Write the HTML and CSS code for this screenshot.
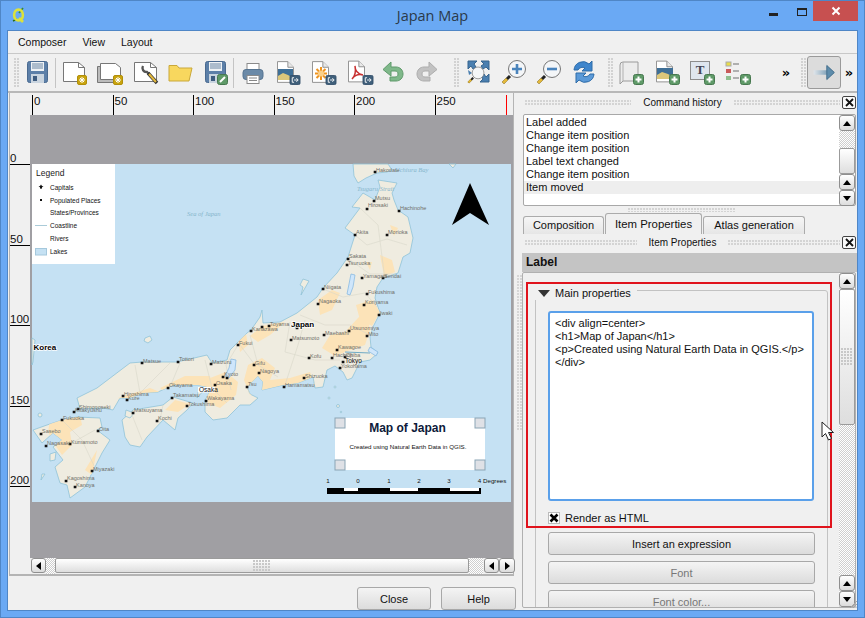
FILE: index.html
```html
<!DOCTYPE html>
<html lang="en">
<head>
<meta charset="utf-8">
<title>Japan Map</title>
<link rel="stylesheet" href="styles.css">
</head>
<body>
<svg class="defs" width="0" height="0" aria-hidden="true">
  <defs>
    <symbol id="b-plus" viewBox="0 0 11 11"><rect x=".5" y=".5" width="10" height="10" rx="2" fill="#5f9a68" stroke="#47784f"/><path d="M5.5 2.5v6M2.5 5.5h6" stroke="#fff" stroke-width="2"/></symbol>
    <symbol id="b-exp" viewBox="0 0 12 11"><rect x=".5" y=".5" width="11" height="10" rx="1.5" fill="#3f5f7a" stroke="#33506a"/><path d="M5 3H3v5h2M5 5.5h4M7.5 3.5l2 2-2 2" fill="none" stroke="#fff"/></symbol>
    <symbol id="b-star" viewBox="0 0 10 10"><rect x=".5" y=".5" width="9" height="9" rx="1.5" fill="#c9a40e" stroke="#b08e0a"/><path d="M5 2v6M2 5h6M3 3l4 4M7 3l-4 4" stroke="#fff"/></symbol>
    <symbol id="doc" viewBox="0 0 18 23"><path d="M.5.5h11l6 6v16H.5z" fill="#fff" stroke="#8c8c8c"/><path d="M11.5.5v6h6" fill="#e8e8e8" stroke="#8c8c8c"/></symbol>
    <symbol id="floppy" viewBox="0 0 21 22"><rect x=".5" y=".5" width="20" height="21" rx="2" fill="#5c7fa8" stroke="#4a6a90"/><rect x="4" y="1" width="13" height="9" fill="#eef2f5"/><path d="M5 3h11M5 5h11M5 7h11" stroke="#6b86a4"/><rect x="4" y="13" width="13" height="9" fill="#c9d4df"/><rect x="6" y="15" width="4" height="5" fill="#3e5c80"/></symbol>
    <symbol id="lens" viewBox="0 0 26 26"><path d="M9 17L2 24" stroke="#222" stroke-width="3"/><path d="M6 20l-4 4" stroke="#e4b93a" stroke-width="3"/><circle cx="16" cy="10" r="8.5" fill="#f4f6f8" stroke="#777"/></symbol>
  </defs>
</svg>

<div class="window">
  <header class="titlebar">
    <div class="title-left">
      <svg class="qgis" viewBox="0 0 14 16" width="14" height="16"><path d="M11 1L7 6" stroke="#3a8a2a" stroke-width="1.6"/><path d="M1 14l4-2" stroke="#2a6a20" stroke-width="1.4"/><ellipse cx="6.5" cy="8" rx="4.4" ry="5.4" fill="none" stroke="#dce23c" stroke-width="2.6"/><path d="M7 11l4 4" stroke="#dce23c" stroke-width="2.6"/></svg>
    </div>
    <h1 class="title-text">Japan Map</h1>
    <div class="win-controls">
      <span class="win-min"></span>
      <span class="win-max"></span>
      <span class="win-close"><svg viewBox="0 0 10 10" width="10" height="10"><path d="M1.5 1.5l7 7M8.5 1.5l-7 7" stroke="#fff" stroke-width="2"/></svg></span>
    </div>
  </header>

  <div class="client">
    <nav class="menubar"><span>Composer</span><span>View</span><span>Layout</span></nav>

    <div class="toolbar">
      <span class="tb-grip g-first"></span>
      <div class="tb-group g-a">
        <svg class="ic" viewBox="0 0 36 36"><use href="#floppy" x="8" y="6" width="21" height="22"/></svg>
        <span class="tb-sep"></span>
        <svg class="ic" viewBox="0 0 36 36"><path d="M8.5 7.5h15l6 5v14h-21z" fill="#fff" stroke="#777"/><path d="M23.5 7.5v5h6" fill="none" stroke="#777"/><use href="#b-star" x="22" y="20" width="10" height="10"/></svg>
        <svg class="ic" viewBox="0 0 36 36"><path d="M7.5 11.5h20v16h-20z" fill="#bbb" stroke="#777"/><path d="M10.5 8.5h15l5 4v12h-20z" fill="#fff" stroke="#777"/><use href="#b-star" x="23" y="20" width="10" height="10"/></svg>
        <svg class="ic" viewBox="0 0 36 36"><path d="M8.5 7.5h16l6 5v14h-22z" fill="#fff" stroke="#777"/><path d="M24.5 7.5v5h6" fill="none" stroke="#777"/><path d="M17 11a4 4 0 0 0 4 6l2 2" fill="none" stroke="#555" stroke-width="2.4"/><path d="M22 18l9 10" stroke="#333" stroke-width="3.4"/><path d="M23 19l7 8" stroke="#e2b83c" stroke-width="2"/></svg>
        <svg class="ic" viewBox="0 0 36 36"><path d="M8 10.500h8l2 2.500h13l-3 13H8z" fill="#f8d75e" stroke="#c9a83a"/></svg>
        <svg class="ic" viewBox="0 0 36 36"><use href="#floppy" x="8" y="6" width="21" height="22"/><rect x="20.500" y="19.500" width="10" height="10" rx="2" fill="#5f9a68" stroke="#47784f"/><path d="M23 27l5-5" stroke="#fff" stroke-width="2"/></svg>
      </div>
      <span class="tb-sep s2"></span>
      <div class="tb-group g-b">
        <svg class="ic" viewBox="0 0 36 36"><rect x="12" y="8.500" width="12" height="8" fill="#fff" stroke="#8a8a8a"/><rect x="8" y="14.500" width="20" height="10" rx="3" fill="#6b8aa8" stroke="#557390"/><rect x="12" y="20.500" width="12" height="8" fill="#fff" stroke="#8a8a8a"/><path d="M14 23h8M14 25.500h8" stroke="#888"/></svg>
        <svg class="ic" viewBox="0 0 36 36"><use href="#doc" x="6" y="6" width="17" height="22"/><rect x="7" y="14" width="15" height="11" fill="#3f6f96"/><path d="M7 25v-4l5-3 5 2 5 3v2z" fill="#dcc77a"/><use href="#b-exp" x="18" y="20" width="12" height="10"/></svg>
        <svg class="ic" viewBox="0 0 36 36"><use href="#doc" x="6" y="6" width="17" height="22"/><path d="M15 12v13M9 18.500h12M10.500 14l9 9M19.500 14l-9 9" stroke="#ee9420" stroke-width="2"/><circle cx="15" cy="18.500" r="3" fill="#fbd089"/><use href="#b-exp" x="19" y="20" width="12" height="10"/></svg>
        <svg class="ic" viewBox="0 0 36 36"><use href="#doc" x="6" y="5" width="17" height="23"/><path d="M10 24c3-3 4-8 3-13 0 5 3 8 8 9-4-1-8 0-11 4z" fill="none" stroke="#c83232" stroke-width="1.500"/><use href="#b-exp" x="20" y="20" width="12" height="10"/></svg>
        <svg class="ic" viewBox="0 0 36 36"><path d="M6 14.500l8-7.500v5h5c4 0 7 3 7 7s-3 7-7 7h-6v-4h5c2 0 3-1 3-3s-1-3-3-3h-4v5z" fill="#7fb88a" stroke="#5f9a6a"/></svg>
        <svg class="ic" viewBox="0 0 36 36"><path d="M24 14.500l-8-7.500v5h-5c-4 0-7 3-7 7s3 7 7 7h6v-4h-5c-2 0-3-1-3-3s1-3 3-3h4v5z" fill="#c2c2c2" stroke="#adadad"/></svg>
      </div>
      <span class="tb-grip g-c"></span>
      <div class="tb-group">
        <svg class="ic" viewBox="0 0 36 36"><path d="M8 6h9l-3 3 2 3-3 2-2-3-3 3zM29 6v9l-3-3-3 2-2-3 3-2-3-3zM29 27h-9l3-3-2-3 3-2 2 3 3-3z" fill="#4a7fb0" stroke="#37648e"/><path d="M8 15l4 3-3 2z" fill="#4a7fb0"/><use href="#lens" x="7" y="11" width="18" height="18"/></svg>
        <svg class="ic" viewBox="0 0 36 36"><use href="#lens" x="5" y="4" width="26" height="26"/><path d="M21 9v10M16 14h10" stroke="#4a84bc" stroke-width="2.600"/></svg>
        <svg class="ic" viewBox="0 0 36 36"><use href="#lens" x="5" y="4" width="26" height="26"/><path d="M16 14h10" stroke="#4a84bc" stroke-width="2.600"/></svg>
        <svg class="ic" viewBox="0 0 36 36"><path d="M7 15a9 9 0 0 1 15-6l3-3v10h-10l3-3a5 5 0 0 0-7 2z" fill="#3e85cc" stroke="#2f6ca8"/><path d="M27 19a9 9 0 0 1-15 6l-3 3V18h10l-3 3a5 5 0 0 0 7-2z" fill="#5b9ad8" stroke="#2f6ca8"/></svg>
      </div>
      <span class="tb-grip g-d"></span>
      <div class="tb-group">
        <svg class="ic" viewBox="0 0 36 36"><path d="M6 10a3 3 0 0 1 3-3h15v19H9l-3 3z" fill="#ececec" stroke="#9a9a9a"/><path d="M9 7v19" stroke="#b0b0b0"/><use href="#b-plus" x="19" y="19" width="11" height="11"/></svg>
        <svg class="ic" viewBox="0 0 36 36"><use href="#doc" x="6" y="5" width="17" height="23"/><rect x="7" y="13" width="16" height="11" fill="#3f6f96"/><path d="M7 24v-4l5-3 6 2 5 3v2z" fill="#dcc77a"/><use href="#b-plus" x="19" y="19" width="11" height="11"/></svg>
        <svg class="ic" viewBox="0 0 36 36"><rect x="5.500" y="6.500" width="19" height="18" fill="#dfe6ee" stroke="#8d8d8d"/><text class="ic-t" x="15" y="19">T</text><use href="#b-plus" x="19" y="19" width="11" height="11"/></svg>
        <svg class="ic" viewBox="0 0 36 36"><rect x="5" y="7" width="5" height="4" fill="#e7dc4a" stroke="#aaa"/><rect x="5" y="14" width="5" height="4" fill="#c95a5a"/><rect x="5" y="21" width="5" height="4" fill="#8fbf8f"/><path d="M12 9h6M12 16h6M12 23h6" stroke="#999" stroke-width="1.500"/><use href="#b-plus" x="19" y="19" width="11" height="11"/></svg>
      </div>
      <div class="tb-end">
        <span class="more">»</span>
        <span class="tb-grip g-e"></span>
        <span class="tb-active"><svg viewBox="0 0 34 33" width="32" height="31"><defs><linearGradient id="shaft"><stop offset="0" stop-color="#dfe5ea"/><stop offset="1" stop-color="#4f7fa0"/></linearGradient></defs><path d="M6 14h14v-5l8 7.500-8 7.500v-5H6z" fill="url(#shaft)"/><path d="M20 9l8 7.500-8 7.500z" fill="#5e8cab" stroke="#456f8c"/></svg></span>
        <span class="more m2">»</span>
      </div>
    </div>

    <div class="workspace">
      <section class="composer">
        <div class="view">
          <div class="corner"></div>
          <div class="ruler-top">
            <span class="rt">0</span><span class="rt">50</span><span class="rt">100</span><span class="rt">150</span><span class="rt">200</span><span class="rt rt-last">250</span>
          </div>
          <div class="ruler-left">
            <span class="rl rl-first">0</span><span class="rl">50</span><span class="rl">100</span><span class="rl">150</span><span class="rl">200</span>
          </div>
          <div class="canvas">
            <svg class="map" viewBox="30 115 483 443" width="483" height="443">
              <defs>
                <path id="honshu" d="M378 180L397 183 392 193 394 200 398 210 408 217 413 238 410 253 403 257 398 273 383 278 377 287 375 298 380 313 373 327 370 337 371 347 378 353 370 360 360 362 352 378 347 380 343 372 335 366 327 370 323 387 315 388 313 377 298 383 283 385 262 390 263 382 258 376 247 387 250 394 258 398 250 405 240 405 227 418 213 420 205 412 205 400 212 388 198 385 173 385 158 392 143 393 130 398 120 398 113 410 103 408 80 409 77 398 97 388 130 363 142 362 150 362 177 362 207 355 212 363 227 360 230 350 247 333 251 330 260 317 262 310 263 323 280 322 297 313 317 297 323 288 337 273 348 257 355 235 345 228 360 208 352 207 363 193 375 200 380 187Z"/>
                <path id="shikoku" d="M122 420L133 410 163 405 173 397 193 403 187 410 178 418 175 430 163 420 147 437 140 447 130 445 125 437Z"/>
                <path id="kyushu" d="M47 425L62 420 77 417 100 418 102 427 97 430 110 440 102 453 92 473 85 487 70 498 67 485 60 483 55 467 63 460 53 447 62 440 53 433 42 443 33 430Z"/>
                <path id="hokkaido" d="M353 164L354 176 358 183 366 178 377 173 387 172 392 170 388 164Z"/>
                <clipPath id="land">
                  <use href="#honshu"/><use href="#shikoku"/><use href="#kyushu"/><use href="#hokkaido"/>
                </clipPath>
              </defs>
              <rect x="32" y="164" width="479" height="338" class="sea"/>
              <g class="land">
                <use href="#honshu"/><use href="#shikoku"/><use href="#kyushu"/><use href="#hokkaido"/>
                <path d="M303 279L309 281 305 288 301 295 303 287 300 285Z"/>
                <path d="M32 338L35 340 33 362 32 365Z"/>
                <path d="M145 338L150 336 152 340 148 343 144 341Z"/>
                <path d="M449 164L456 164 453 168Z"/>
                <path d="M198 392L203 387 204 390 197 398Z"/>
                <path d="M126 410L134 413 130 418 125 416Z"/>
                <path d="M50 454L56 452 55 460 50 461Z"/>
                <path d="M42 474L45 474 41 480Z"/>
                <circle cx="40" cy="415" r="2"/><circle cx="335" cy="387" r="1"/><circle cx="329" cy="398" r="1"/><circle cx="338" cy="406" r="1.500"/><circle cx="341" cy="412" r=".8"/>
              </g>
              <g clip-path="url(#land)">
                <path class="urban" d="M330 335L345 332 358 318 366 310 370 330 365 345 350 350 335 356 322 348ZM356 305L372 300 380 312 372 326 360 320ZM318 300L332 290 340 293 332 310 320 315ZM248 365L262 358 275 368 270 380 290 378 300 375 310 372 315 385 285 386 262 392 250 395 244 380ZM210 378L226 372 238 382 236 395 220 408 208 403 205 390ZM160 388L185 376 210 376 212 386 190 388 165 392ZM118 398L150 388 160 392 130 402ZM50 420L80 415 82 425 70 432 72 445 62 455 55 445 48 432ZM85 470L97 450 92 475ZM250 336L262 326 285 322 270 335 258 342ZM380 255L392 260 395 272 384 276ZM238 340L246 334 248 345 240 352ZM165 410L175 400 190 404 178 412ZM390 225L398 228 394 236ZM366 262L372 262 370 270Z"/>
                <path class="border" d="M355 235L367 245 387 239 407 245M350 260L370 274 395 274M323 289L343 297 365 293 377 307M300 315L325 325 350 325 370 335M290 322L285 352 315 360 340 360M250 335L258 365 278 377M238 345L226 365 231 390M212 388L227 403M140 393L135 365M170 387L180 363M130 410L142 440M163 405L158 430M62 420L82 440 96 470M70 444L95 430M140 393L170 363M360 208L378 225 385 280M305 320L298 345 285 385M255 365L240 345M205 360L212 388"/>
                <path class="coast" d="M345 352L370 353"/>
              </g>
              <path class="lake" d="M351 274L355 275 353 287 350 295 347 294 349 284Z"/>
              <path class="lake" d="M231 359L236 360 235 370 229 378 225 376 229 368Z"/>
              <path class="lake" d="M370 347L378 352 376 356 368 351Z"/>
              <text class="seatext" x="187" y="216">Sea of Japan</text>
              <text class="seatext" x="395" y="172">Uchiura Bay</text>
              <text class="seatext" x="357" y="191">Tsugaru Strait</text>
              <path class="dots" d="M375 172h.1M374 201h.1M367 209h.1M399 211h.1M355 235h.1M387 235h.1M348 259h.1M347 265h.1M362 278h.1M383 278h.1M323 289h.1M318 304h.1M367 294h.1M364 305h.1M379 315h.1M349 331h.1M367 336h.1M324 335h.1M291 340h.1M269 326h.1M262 327h.1M251 331h.1M238 345h.1M254 365h.1M259 373h.1M247 387h.1M284 387h.1M304 378h.1M309 358h.1M332 358h.1M337 350h.1M345 357h.1M343 362h.1M340 368h.1M297 328h.1M211 364h.1M223 377h.1M227 378h.1M215 385h.1M206 401h.1M187 406h.1M168 388h.1M172 398h.1M142 363h.1M178 362h.1M123 396h.1M127 400h.1M133 413h.1M157 421h.1M78 409h.1M74 412h.1M62 420h.1M98 431h.1M41 434h.1M46 446h.1M70 444h.1M92 471h.1M66 481h.1M75 487h.1M238 345h.1"/>
              <g class="city">
                <text x="376" y="172">Hakodate</text><text x="375" y="200">Mutsu</text><text x="368" y="207">Hirosaki</text><text x="400" y="210">Hachinohe</text><text x="356" y="234">Akita</text><text x="388" y="234">Morioka</text><text x="349" y="258">Sakata</text><text x="348" y="265">Tsuruoka</text><text x="363" y="278">Yamagata</text><text x="384" y="278">Sendai</text><text x="324" y="289">Niigata</text><text x="319" y="303">Nagaoka</text><text x="368" y="294">Fukushima</text><text x="365" y="304">Koriyama</text><text x="380" y="315">Iwaki</text><text x="350" y="330">Utsunomiya</text><text x="368" y="336">Mito</text><text x="325" y="335">Maebashi</text><text x="292" y="340">Matsumoto</text><text x="270" y="326">Toyama</text><text x="252" y="331">Kanazawa</text><text x="239" y="345">Fukui</text><text x="255" y="365">Gifu</text><text x="260" y="373">Nagoya</text><text x="248" y="386">Tsu</text><text x="285" y="387">Hamamatsu</text><text x="305" y="378">Shizuoka</text><text x="310" y="358">Kofu</text><text x="333" y="357">Hachioji</text><text x="338" y="349">Kawagoe</text><text x="346" y="357">Chiba</text><text x="341" y="368">Yokohama</text><text x="212" y="364">Maizuru</text><text x="224" y="376">Kyoto</text><text x="216" y="385">Osaka</text><text x="207" y="400">Wakayama</text><text x="188" y="406">Tokushima</text><text x="169" y="387">Okayama</text><text x="173" y="397">Takamatsu</text><text x="143" y="363">Matsue</text><text x="179" y="361">Tottori</text><text x="124" y="396">Hiroshima</text><text x="128" y="400">Kure</text><text x="134" y="412">Matsuyama</text><text x="158" y="420">Kochi</text><text x="79" y="409">Shimonoseki</text><text x="75" y="412">Kitakyushu</text><text x="63" y="420">Fukuoka</text><text x="99" y="431">Oita</text><text x="42" y="433">Sasebo</text><text x="47" y="445">Nagasaki</text><text x="71" y="444">Kumamoto</text><text x="93" y="471">Miyazaki</text><text x="67" y="480">Kagoshima</text><text x="76" y="487">Kanoya</text>
              </g>
              <rect class="halo" x="198" y="387" width="17" height="5.500"/>
              <text class="city-main" x="199" y="391.500">Osaka</text>
              <text class="city-main" x="345" y="363">Tokyo</text>
              <text class="country" x="291" y="326.500">Japan</text>
              <text class="country" x="33.500" y="350">Korea</text>

              <rect class="white" x="32" y="164" width="83" height="100"/>
              <text class="lg-title" x="36" y="176">Legend</text>
              <g class="lg">
                <text x="50" y="190">Capitals</text><text x="50" y="203">Populated Places</text><text x="50" y="215">States/Provinces</text><text x="50" y="228">Coastline</text><text x="50" y="241">Rivers</text><text x="50" y="254">Lakes</text>
              </g>
              <path d="M41 184.500l1 1.500 1.500.5-1.500.8v1.700l-1-.8-1 .8v-1.700l-1.500-.8 1.500-.5z" fill="#111"/>
              <rect x="40" y="199" width="2" height="2" fill="#111"/>
              <path d="M35 225.500h12" stroke="#aacbd8"/>
              <rect x="35.500" y="248.500" width="11" height="6.500" fill="#c5e1f3" stroke="#a5c8dc"/>

              <path class="north" d="M470 183l19 42-19-12-18 12z"/>

              <rect class="white" x="335" y="418" width="150" height="52"/>
              <text class="map-title" x="407.500" y="432">Map of Japan</text>
              <text class="map-sub" x="408" y="449">Created using Natural Earth Data in QGIS.</text>
              <g class="handle">
                <rect x="335" y="418" width="10" height="10"/><rect x="475" y="418" width="10" height="10"/><rect x="335" y="460" width="10" height="10"/><rect x="475" y="460" width="10" height="10"/>
              </g>
              <g class="scale-txt">
                <text x="328" y="483">1</text><text x="358" y="483">0</text><text x="389" y="483">1</text><text x="419" y="483">2</text><text x="449" y="483">3</text><text x="479.500" y="483">4</text><text x="483" y="483" class="start">Degrees</text>
              </g>
              <rect x="327" y="488" width="154" height="6" fill="#000"/>
              <path d="M344 489.500h14M390 489.500h28M450 489.500h29" stroke="#fff" stroke-width="3"/>
            </svg>
          </div>
          <div class="hscroll">
            <span class="sb-btn"><i class="tri tri-l"></i></span>
            <span class="sb-track sb-s"></span>
            <span class="sb-thumb"><i class="thumb-grip"></i></span>
            <span class="sb-track sb-e"></span>
            <span class="sb-btn"><i class="tri tri-l"></i></span>
            <span class="sb-btn"><i class="tri tri-r"></i></span>
          </div>
        </div>
        <footer class="actions">
          <button class="btn btn-close" type="button">Close</button>
          <button class="btn btn-help" type="button">Help</button>
        </footer>
      </section>

      <aside class="docks">
        <div class="dock-title dt1"><i class="dgrip"></i><span>Command history</span><i class="dgrip"></i><b class="xbtn"><svg viewBox="0 0 9 9" width="9" height="9"><path d="M1 1l7 7M8 1l-7 7" stroke="#111" stroke-width="1.800"/></svg></b></div>
        <div class="history">
          <ul class="hist-list">
            <li>Label added</li><li>Change item position</li><li>Change item position</li><li>Label text changed</li><li>Change item position</li><li class="sel">Item moved</li>
          </ul>
          <div class="vscroll">
            <span class="sb-btn v"><i class="tri tri-u"></i></span>
            <span class="sb-track hist-track"></span>
            <span class="sb-thumb hist-thumb"></span>
            <span class="sb-btn v"><i class="tri tri-u"></i></span>
            <span class="sb-btn v"><i class="tri tri-d"></i></span>
          </div>
        </div>
        <div class="splitter"><i></i></div>
        <div class="tabs">
          <span class="tab t1">Composition</span>
          <span class="tab t2 on">Item Properties</span>
          <span class="tab t3">Atlas generation</span>
        </div>
        <div class="dock-title dt2"><i class="dgrip"></i><span>Item Properties</span><i class="dgrip"></i><b class="xbtn"><svg viewBox="0 0 9 9" width="9" height="9"><path d="M1 1l7 7M8 1l-7 7" stroke="#111" stroke-width="1.800"/></svg></b></div>
        <div class="label-head">Label</div>
        <div class="prop-row">
          <i class="side-grip"></i>
          <div class="prop-frame">
            <div class="prop-content">
              <div class="group">
                <div class="group-title"><i class="tri-down"></i><span>Main properties</span></div>
                <div class="editor">&lt;div align=center&gt;<br>&lt;h1&gt;Map of Japan&lt;/h1&gt;<br>&lt;p&gt;Created using Natural Earth Data in QGIS.&lt;/p&gt;<br>&lt;/div&gt;</div>
                <div class="check-row">
                  <span class="check"><svg viewBox="0 0 10 10" width="10" height="10"><path d="M1.500 1.500l7 7M8.500 1.500l-7 7" stroke="#000" stroke-width="2.600"/></svg></span>
                  <span>Render as HTML</span>
                </div>
                <button class="btn wide" type="button">Insert an expression</button>
                <button class="btn wide dis" type="button">Font</button>
                <button class="btn wide dis" type="button">Font color...</button>
              </div>
            </div>
            <div class="vscroll prop-sb">
              <span class="sb-btn v"><i class="tri tri-u"></i></span>
              <span class="sb-thumb prop-thumb"><i class="thumb-grip"></i></span>
              <span class="sb-track prop-track"></span>
              <span class="sb-btn v"><i class="tri tri-u"></i></span>
              <span class="sb-btn v"><i class="tri tri-d"></i></span>
            </div>
          </div>
        </div>
        <div class="annotation"></div>
        <svg class="cursor" viewBox="0 0 13 20" width="13" height="20"><path d="M1 1v15l3.500-3.500 3 6.500 3-1.500-3-6h5z" fill="#fff" stroke="#222"/></svg>
        <svg class="resize" viewBox="0 0 7 7" width="7" height="7"><path d="M7 0L0 7M7 3L3 7M7 5.500L5.500 7" stroke="#a5a5a5"/></svg>
      </aside>
    </div>
  </div>
</div>
</body>
</html>
```

FILE: styles.css
```css
* { box-sizing: border-box; }
html, body { margin: 0; padding: 0; }
body {
  width: 865px;
  height: 618px;
  overflow: hidden;
  font-family: "Liberation Sans", sans-serif;
  font-size: 11px;
  color: #111;
  background: #6aa9f4;
}
.defs { position: absolute; }
i, b { display: block; font-style: normal; }

.window {
  width: 865px;
  height: 618px;
  display: flex;
  flex-direction: column;
  border: 1px solid #4f86c6;
}
.titlebar {
  height: 30px;
  flex: none;
  display: grid;
  grid-template-columns: 1fr auto 1fr;
}
.title-left { padding: 6px 0 0 11px; }
.qgis { display: block; }
.title-text {
  margin: 0;
  font-weight: 400;
  font-size: 14.5px;
  line-height: 30px;
  color: #2b3a4a;
  font-family: "Open Sans", "Liberation Sans", sans-serif;
}
.win-controls {
  display: flex;
  justify-content: flex-end;
  align-items: flex-start;
  padding-right: 6px;
}
.win-min { width: 9px; height: 3px; margin: 12px 19px 0 0; background: #222; }
.win-max { width: 10px; height: 8px; margin: 7px 6px 0 0; border: 1px solid #222; border-top-width: 2px; }
.win-close {
  width: 45px;
  height: 20px;
  background: #c75050;
  display: flex;
  align-items: center;
  justify-content: center;
}

.client {
  width: 849px;
  height: 579px;
  margin-left: 7px;
  background: #f0f0f0;
  box-shadow: 0 0 0 1px #4f86c6;
  display: flex;
  flex-direction: column;
}
.menubar {
  height: 22px;
  flex: none;
  display: flex;
  align-items: center;
  gap: 16px;
  padding-left: 10px;
  font-size: 10.500px;
}
.toolbar {
  height: 40px;
  flex: none;
  display: flex;
  align-items: center;
  border-top: 1px solid #c8c8c8;
  border-bottom: 2px solid #b8b8b8;
}
.tb-grip {
  display: block;
  flex: none;
  width: 6px;
  height: 30px;
  background-image: radial-gradient(circle at 1px 1px, #d2d2d2 1px, transparent 1.2px);
  background-size: 3px 3px;
}
.g-first { margin-left: 6px; margin-right: -1px; }
.g-c { margin-left: 6px; }
.g-d { margin-left: 6px; }
.g-e { margin-left: 9px; }
.tb-group { display: flex; align-items: center; }
.ic { display: block; flex: none; width: 36px; height: 36px; margin-right: -.5px; }
.tb-sep { display: block; flex: none; width: 1px; height: 30px; margin-right: -1px; background: #c4c4c4; }
.s2 { margin: 0 1px; }
.ic-t { font-family: "Liberation Serif", serif; font-size: 13px; font-weight: 700; text-anchor: middle; fill: #445; }
.tb-end { margin-left: auto; display: flex; align-items: center; padding-right: 2px; }
.more { width: 12px; text-align: center; font-size: 13px; font-weight: 700; line-height: 14px; font-family: "DejaVu Sans", sans-serif; color: #000; }
.tb-active {
  display: block;
  width: 34px;
  height: 33px;
  border: 1px solid #9a9a9a;
  border-radius: 3px;
  background: #dcdcdc;
}
.tb-active svg { display: block; }
.m2 { margin-left: 2px; }

.workspace { flex: 1; min-height: 0; display: flex; }
.composer { width: 508px; flex: none; display: flex; flex-direction: column; }
.view {
  width: 505px;
  height: 483px;
  flex: none;
  margin-left: 1px;
  border-left: 1px solid #b4b4b4;
  border-right: 1px solid #b4b4b4;
  border-bottom: 2px solid #b4b4b4;
  display: grid;
  grid-template-columns: 20px 483px;
  grid-template-rows: 22px 443px 16px;
}
.corner { background: #f0f0f0; }
.ruler-top { display: flex; overflow: hidden; padding-left: 2px; font-size: 11.5px; }
.rt {
  flex: none;
  width: 80.500px;
  height: 20px;
  margin-top: 2px;
  border-left: 1px solid #000;
  padding-left: 1px;
  line-height: 12px;
}
.rt-last { width: 72px; border-right: 1px solid #f00; }
.ruler-left { grid-row: 2 / 4; display: flex; flex-direction: column; font-size: 11.500px; }
.rl {
  flex: none;
  height: 80.500px;
  border-bottom: 1px solid #000;
  display: flex;
  align-items: flex-end;
  line-height: 12px;
  padding-left: 0;
}
.rl-first { height: 50px; }
.canvas { background: #a09fa3; overflow: hidden; }
.map { display: block; }
.sea { fill: #c5e1f3; }
.land use, .land path, .land circle { fill: #efece0; stroke: #8fc3d8; stroke-width: .8; }
.urban { fill: #fce3b8; }
.border { fill: none; stroke: #d9d6c9; stroke-width: .6; }
.coast { fill: none; stroke: #6fa9c4; stroke-width: 1; }
.lake { fill: #cfe6fb; stroke: #7fb4e0; stroke-width: .7; }
.seatext { font-family: "Liberation Serif", serif; font-style: italic; font-size: 6.500px; fill: #86b6cc; }
.dots { fill: none; stroke: #111; stroke-width: 2.600; stroke-linecap: square; }
.city text { font-family: "Liberation Sans", sans-serif; font-size: 5.500px; fill: #6f6f68; }
.halo { fill: #fff; }
.city-main { font-family: "Liberation Sans", sans-serif; font-size: 6.500px; fill: #111; }
.country { font-family: "Liberation Sans", sans-serif; font-size: 8px; font-weight: 700; fill: #000; paint-order: stroke; stroke: #fff; stroke-width: 1.500px; }
.white { fill: #fff; }
.lg-title { font-family: "Liberation Sans", sans-serif; font-size: 8.500px; fill: #222; }
.lg text { font-family: "Liberation Sans", sans-serif; font-size: 6.500px; fill: #111; }
.north { fill: #000; }
.map-title { font-family: "Liberation Sans", sans-serif; font-size: 12px; font-weight: 700; text-anchor: middle; fill: #0d1a3a; }
.map-sub { font-family: "Liberation Sans", sans-serif; font-size: 6.200px; text-anchor: middle; fill: #111; }
.handle rect { fill: #dfe1e6; stroke: #8ba5b5; stroke-width: 1; }
.scale-txt text { font-family: "Liberation Sans", sans-serif; font-size: 6.200px; text-anchor: middle; fill: #111; }
.scale-txt .start { text-anchor: start; }

.hscroll { display: flex; padding-left: 1px; background: #f0f0f0; }
.sb-btn {
  display: flex;
  align-items: center;
  justify-content: center;
  flex: none;
  width: 15px;
  height: 15px;
  background: linear-gradient(#fff, #dcdcdc);
  border: 1px solid #8f8f8f;
  border-radius: 3px;
}
.sb-btn.v { width: 16px; height: 16px; }
.tri { display: block; width: 0; height: 0; border: 4px solid transparent; }
.tri-l { border-right: 5px solid #000; border-left-width: 0; }
.tri-r { border-left: 5px solid #000; border-right-width: 0; }
.tri-u { border-bottom: 5px solid #000; border-top-width: 0; }
.tri-d { border-top: 5px solid #000; border-bottom-width: 0; }
.sb-track {
  display: block;
  flex: none;
  background: repeating-conic-gradient(#cfcfcf 0 25%, #fff 0 50%) 0 0 / 2px 2px;
}
.sb-s { width: 9px; }
.sb-e { width: 14px; margin-right: 1px; }
.sb-thumb {
  display: flex;
  align-items: center;
  justify-content: center;
  flex: none;
  background: linear-gradient(#fff, #dedede);
  border: 1px solid #9b9b9b;
  border-radius: 2px;
}
.hscroll .sb-thumb { width: 414px; height: 15px; }
.hscroll .sb-btn + .sb-btn { width: 16px; }
.thumb-grip {
  width: 18px;
  height: 11px;
  background-image: radial-gradient(circle at 1px 1px, #c8c8c8 1px, transparent 1.2px);
  background-size: 3px 3px;
}
.actions { flex: 1; display: flex; justify-content: flex-end; gap: 10px; padding-top: 11px; }
.btn {
  display: block;
  font: inherit;
  color: #111;
  height: 23px;
  padding: 0;
  background: linear-gradient(#f4f4f4, #dcdcdc);
  border: 1px solid #a8a8a8;
  border-radius: 3px;
}
.btn-close { width: 74px; }
.btn-help { width: 75px; }

.docks { position: relative; flex: 1; min-width: 0; display: flex; flex-direction: column; }
.dock-title {
  flex: none;
  display: flex;
  align-items: center;
  gap: 12px;
  padding: 0 1px 2px 9px;
  font-size: 10px;
}
.dt1 { height: 21px; }
.dt2 { height: 19px; }
.dgrip {
  flex: 1;
  height: 6px;
  background-image: radial-gradient(circle at 1px 1px, #d4d4d4 1px, transparent 1.2px);
  background-size: 3px 3px;
}
.xbtn {
  flex: none;
  width: 14px;
  height: 13px;
  margin-left: -10px;
  display: flex;
  align-items: center;
  justify-content: center;
  background: #fafafa;
  border: 1px solid #444;
  border-radius: 2px;
}
.history {
  flex: none;
  height: 92px;
  margin: 0 1px 0 7px;
  display: flex;
  background: #fff;
  border: 1px solid #a8a8a8;
  border-radius: 2px;
}
.hist-list { flex: 1; margin: 0; padding: 1px 0 0; list-style: none; line-height: 13px; }
.hist-list li { padding-left: 2px; height: 13px; }
.hist-list .sel { background: #eee; }
.vscroll { flex: none; width: 16px; display: flex; flex-direction: column; }
.hist-track { height: 17px; }
.hist-thumb { height: 26px; }
.splitter { flex: none; height: 7px; display: flex; justify-content: center; align-items: center; padding-right: 10px; }
.splitter i {
  width: 108px;
  height: 4px;
  background-image: radial-gradient(circle at 1px 1px, #d4d4d4 1px, transparent 1.2px);
  background-size: 3px 3px;
}
.tabs { flex: none; height: 21px; display: flex; align-items: flex-end; padding-left: 7px; }
.tab {
  display: block;
  height: 18px;
  line-height: 17px;
  text-align: center;
  font-size: 11px;
  background: linear-gradient(#f6f6f6, #e6e6e6);
  border: 1px solid #ababab;
  border-bottom: 0;
  border-radius: 3px 3px 0 0;
}
.t1 { width: 81px; margin-right: 1px; }
.t2 { width: 97px; }
.t3 { width: 102px; margin-left: 1px; }
.tab.on { height: 21px; line-height: 20px; background: #f0f0f0; font-size: 11.400px; }
.label-head {
  flex: none;
  height: 19px;
  margin-left: 6px;
  background: #c4c4c4;
  padding-left: 4px;
  font-weight: 700;
  font-size: 12px;
  line-height: 19px;
}
.prop-row { flex: none; height: 336px; display: flex; }
.side-grip {
  flex: none;
  width: 6px;
  height: 156px;
  margin-top: 3px;
  background-image: radial-gradient(circle at 2px 1px, #d6d6d6 1px, transparent 1.2px);
  background-size: 3px 3px;
}
.prop-frame {
  flex: none;
  width: 334px;
  display: flex;
  border: 1px solid #b0b0b0;
  border-radius: 2px;
}
.prop-content { flex: 1; min-width: 0; overflow: hidden; padding: 17px 0 0 12px; }
.prop-sb { background: repeating-conic-gradient(#d8d8d8 0 25%, #fff 0 50%) 0 0 / 2px 2px; }
.prop-thumb { height: 136px; flex: none; }
.prop-thumb .thumb-grip { width: 12px; height: 18px; }
.prop-track { flex: 1; }
.group {
  width: 293px;
  height: 340px;
  border: 1px solid #c2c2c2;
  border-radius: 3px;
  padding: 0 0 0 12px;
}
.group-title {
  display: flex;
  align-items: center;
  gap: 5px;
  width: 102px;
  height: 14px;
  margin: -5px 0 11px -13px;
  padding-left: 3px;
  background: #f0f0f0;
}
.tri-down { width: 0; height: 0; border: 6px solid transparent; border-top: 7px solid #333; border-bottom-width: 0; }
.editor {
  width: 266px;
  height: 190px;
  background: #fff;
  border: 2px solid #5aa0ea;
  border-radius: 3px;
  padding: 4px 5px;
  line-height: 13px;
  white-space: nowrap;
}
.check-row { display: flex; align-items: center; gap: 5px; height: 13px; margin: 10px 0 8px; }
.check {
  display: flex;
  align-items: center;
  justify-content: center;
  width: 12px;
  height: 12px;
  background: #fff;
  border: 1px solid #bbb;
}
.wide { width: 267px; margin-bottom: 6px; }
.dis { color: #777; }
.annotation {
  position: absolute;
  left: 10px;
  top: 189px;
  width: 306px;
  height: 246px;
  border: 2px solid #e0131c;
}
.cursor { position: absolute; left: 305px; top: 328px; }
.resize { position: absolute; right: 0; bottom: 2px; }
```
